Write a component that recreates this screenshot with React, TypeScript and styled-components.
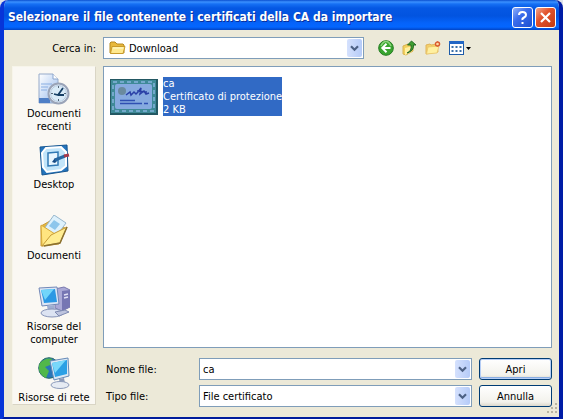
import React from "react";
import styled, { createGlobalStyle, css } from "styled-components";

const GlobalStyle = createGlobalStyle`
  *, *::before, *::after { box-sizing: border-box; }
  body { margin: 0; background: #dfe3ea; }
  body, button, input, select {
    font-family: "DejaVu Sans Condensed", "Liberation Sans", sans-serif;
    font-size: 11px;
    line-height: 13px;
    color: #000;
  }
`;

const Dialog = styled.main`
  display: flex;
  flex-direction: column;
  min-height: 100vh;
  border: 4px solid #0831d9;
  border-top: 0;
  border-color: #0d45dc #001ca6 #001c9c #0735d8;
  border-radius: 8px 8px 0 0;
  background: #ece9d8;
  overflow: hidden;
`;

const TitleBar = styled.header`
  display: flex;
  align-items: center;
  gap: 2px;
  height: 30px;
  margin: 0 -4px;
  padding: 4px 7px 0 8px;
  background: linear-gradient(
    #0a4fd0 0, #3b91ff 2px, #1670f4 4px, #0558e4 8px,
    #0254e0 16px, #0563fa 23px, #0366ff 27px, #0244c5 30px
  );
`;

const Title = styled.h1`
  flex: 1;
  margin: 0;
  white-space: nowrap;
  font-size: 12px;
  line-height: 16px;
  font-weight: 700;
  color: #fff;
  text-shadow: 1px 1px 0 #0a2f9a;
`;

const CaptionButton = styled.button<{ $danger?: boolean }>`
  display: grid;
  place-items: center;
  width: 21px;
  height: 21px;
  padding: 0;
  border: 1px solid #fff;
  border-radius: 3px;
  background: ${(p) =>
    p.$danger
      ? "linear-gradient(135deg, #f0a58c, #e2532c 40%, #c43a12)"
      : "linear-gradient(135deg, #8fb0fa, #3a6cec 40%, #1c4fd0)"};
`;

const Content = styled.div`
  flex: 1;
  display: grid;
  grid-template-columns: 84px minmax(0, 1fr);
  grid-template-rows: 22px minmax(0, 1fr);
  gap: 7px;
  padding: 7px 7px 8px 8px;
`;

const LookInLabel = styled.label`
  align-self: center;
  text-align: right;
`;

const Toolbar = styled.div`
  display: flex;
  align-items: center;
  gap: 8px;
`;

const Tools = styled.div`
  display: flex;
  align-items: center;
  gap: 8px;
  margin-left: 6px;
`;

const ToolButton = styled.button`
  display: flex;
  align-items: center;
  padding: 0;
  border: 0;
  background: none;
`;

const Field = styled.div<{ $lookIn?: boolean }>`
  position: relative;
  display: flex;
  align-items: center;
  height: 22px;
  border: 1px solid #7f9db9;
  background: #fff;
  ${(p) => p.$lookIn && css`flex: 0 1 261px;`}
`;

const controlStyle = css<{ $indent?: boolean }>`
  width: 100%;
  height: 20px;
  padding: 0 20px 0 ${(p) => (p.$indent ? 25 : 3)}px;
  border: 0;
  outline: 0;
  background: transparent;
  appearance: none;
`;
const Select = styled.select`${controlStyle}`;
const TextInput = styled.input`${controlStyle}`;

const FieldIcon = styled.span`
  position: absolute;
  left: 5px;
  display: flex;
  pointer-events: none;
`;

const Arrow = styled.span`
  position: absolute;
  right: 1px;
  display: grid;
  place-items: center;
  width: 15px;
  height: 18px;
  border-radius: 2px;
  background: linear-gradient(90deg, #d5e1fd, #b5cbf8);
  pointer-events: none;
`;

const Places = styled.nav`
  display: flex;
  flex-direction: column;
  margin-bottom: 4px;
  padding-top: 6px;
  border: 1px solid #f7f5ea;
  border-right-color: #d9d5c5;
  border-bottom-color: #d9d5c5;
  background: #faf8f3;
`;

const Place = styled.button`
  display: flex;
  flex-direction: column;
  align-items: center;
  gap: 2px;
  flex: 0 0 71px;
  padding: 0 2px;
  border: 0;
  background: none;

  &:last-child { flex-basis: 47px; }
`;

const Main = styled.div`
  display: flex;
  flex-direction: column;
  gap: 10px;
  padding-bottom: 2px;
`;

const FileList = styled.section`
  flex: 1;
  padding: 10px 6px;
  border: 1px solid #7f9db9;
  background: #fff;
`;

const FileItem = styled.button`
  display: flex;
  align-items: center;
  gap: 5px;
  padding: 0;
  border: 0;
  background: none;
  text-align: left;
`;

const FileText = styled.span`
  display: flex;
  flex-direction: column;
  background: #316ac5;
  color: #fff;
  white-space: nowrap;
`;

const Form = styled.form`
  display: grid;
  grid-template-columns: 89px minmax(0, 1fr) 73px;
  gap: 5px 7px;
  align-items: center;
`;

const FormLabel = styled.label`
  padding-left: 3px;
`;

const PushButton = styled.button<{ $primary?: boolean }>`
  height: 22px;
  padding: 0;
  border: 1px solid #003c74;
  border-radius: 3px;
  background: linear-gradient(#fff, #f3f2ec 80%, #dcd8cb);
  ${(p) => p.$primary && css`box-shadow: inset 0 0 0 1px #b5cdf5, inset 0 -2px 0 #89ade4;`}
`;

const Grip = styled.svg`
  position: fixed;
  right: 5px;
  bottom: 5px;
`;

const Chevron = () => (
  <Arrow>
    <svg width="9" height="7" viewBox="0 0 9 7">
      <path d="M1 1.2 4.5 4.7 8 1.2" fill="none" stroke="#4d6185" strokeWidth="2.2" />
    </svg>
  </Arrow>
);

const FolderIcon = () => (
  <svg width="17" height="16" viewBox="0 0 17 16">
    <path d="M1 13V3l1-1h4l2 2h6l1 1v8z" fill="#e8b83c" stroke="#b78a22" />
    <path d="M3 6.500h13l-2 7H1.500z" fill="#ffe98f" stroke="#c99b2c" />
    <path d="M4 8h10" stroke="#fffbd2" />
  </svg>
);

const BackIcon = () => (
  <svg width="16" height="16" viewBox="0 0 16 16">
    <circle cx="8" cy="8" r="7.300" fill="#39a52f" stroke="#237b20" />
    <path d="M3 6Q5 1.500 8 1.500T13 6" fill="none" stroke="#8bd47b" strokeWidth="1.500" />
    <path d="M8.500 3.800 4.300 8l4.200 4.200M4.800 8H12.500" fill="none" stroke="#fff" strokeWidth="2" />
  </svg>
);

const UpIcon = () => (
  <svg width="15" height="16" viewBox="0 0 15 16">
    <path d="M1 6 6 4l1 1 4-1v7l-7 4-3-1z" fill="#f3d05c" stroke="#d8b352" />
    <path d="m3 8 8-2-2 6-6 3z" fill="#fff0a0" />
    <path d="M5 13q5-2 4-8H5.500L9.500 1 14 5h-2.500Q12 11 5 13z" fill="#3f9e32" stroke="#1d6320" strokeWidth=".9" />
  </svg>
);

const NewFolderIcon = () => (
  <svg width="16" height="16" viewBox="0 0 16 16">
    <path d="M1 14V5l4-1 1 1 6-1 1 8z" fill="#f4d06a" stroke="#e0b45a" />
    <path d="m3 7 11-1-2 7-10.500 1z" fill="#fff0a0" stroke="#e8c468" strokeWidth=".8" />
    <path d="M12.500 1v6M9.500 4h6M10.500 2l4 4M14.500 2l-4 4" stroke="#ef9a6c" />
    <circle cx="12.500" cy="4" r="2" fill="#ffd9a0" stroke="#d8582f" strokeWidth="1.300" />
  </svg>
);

const ViewsIcon = () => (
  <svg width="23" height="16" viewBox="0 0 23 16">
    <rect x=".5" y="1.500" width="14" height="13" fill="#fff" stroke="#1d5ba8" />
    <path d="M0 1h15v3H0z" fill="#2367c5" />
    <path d="M2.500 6h2v2h-2zm4 0h2v2h-2zm4 0h2v2h-2zm-8 4h2v2h-2zm4 0h2v2h-2zm4 0h2v2h-2z" fill="#3b70a8" />
    <path d="M17 7h5l-2.500 3z" fill="#000" />
  </svg>
);

const RecentIcon = () => (
  <svg width="32" height="32" viewBox="0 0 32 32">
    <defs>
      <linearGradient id="paper" x2="1" y2="1">
        <stop stopColor="#fff" /><stop offset="1" stopColor="#95b9ed" />
      </linearGradient>
    </defs>
    <path d="M1 1h14l5 5v24H1z" fill="url(#paper)" stroke="#96aac9" />
    <path d="M15 1v5h5" fill="#fff" stroke="#8ba6cd" />
    <path d="M3 11h11M3 14h7M3 17h6" stroke="#89aee2" />
    <path d="M1 25h11v5H1z" fill="#4f7fc6" />
    <circle cx="20.500" cy="20.500" r="10" fill="#eef6fc" stroke="#9aa4b8" strokeWidth="2" />
    <circle cx="20.500" cy="20.500" r="8" fill="#d9ebf8" stroke="#b4c8de" />
    <path d="M20.500 13v2M20.500 26v2M13 20.500h2M26 20.500h2" stroke="#567" />
    <path d="m25 15-5 7-4-1m4 1h6" fill="none" stroke="#164066" strokeWidth="1.800" />
  </svg>
);

const DesktopIcon = () => (
  <svg width="32" height="32" viewBox="0 0 32 32">
    <path d="m2 3 27-2 1 26L4 31z" fill="#2374bd" stroke="#16558f" />
    <path d="m8 4 15-1 5 5v14l-5 4-14 2-4-5-1-14z" fill="#c2e5fa" stroke="#fff" strokeWidth="2" />
    <path d="m10 9 10-1v13l-10 1z" fill="#e8f6ff" stroke="#3079b5" strokeWidth="1.500" />
    <path d="m14 18 3-4 3 2-3 3z" fill="#164a84" />
    <path d="m17 16 10-4" stroke="#2667a2" strokeWidth="3" />
    <path d="m26 12 5-1" stroke="#a63a4b" strokeWidth="3" />
  </svg>
);

const DocumentsIcon = () => (
  <svg width="32" height="32" viewBox="0 0 32 32">
    <path d="m3 11 9-5 15 7-6 16-18 2z" fill="#e2b641" stroke="#c99d3c" />
    <path d="m16 0 12 8-11 15-11-9z" fill="#ddf1fc" stroke="#96b6cc" />
    <path d="m16 5 6 4-5 6-6-4z" fill="#8cc6ec" />
    <path d="m3 10 14 9L4 31z" fill="#ffe580" stroke="#d7aa3b" />
    <path d="m29 12-16 8-9 11 18-3z" fill="#ffed92" stroke="#c59a36" />
    <path d="m29 12-7 16-16 3" fill="none" stroke="#8b7131" strokeWidth="1.500" />
  </svg>
);

const ComputerIcon = () => (
  <svg width="32" height="32" viewBox="0 0 32 32">
    <path d="m17 3 9-2 6 3v17l-8 4-7-3z" fill="#aaa9d6" stroke="#7878ad" />
    <path d="m24 5 8-1v17l-8 4z" fill="#7676b3" />
    <path d="m26 9 4-1M26 12l4-1" stroke="#e1e1f6" strokeWidth="1.500" />
    <path d="m1 2 18-1 2 17-17 2z" fill="#dce6f5" stroke="#7288b7" />
    <path d="m3 4 14-1 2 13-13 1z" fill="#2b98e4" />
    <path d="m3 4 13-1-9 11z" fill="#71d5fa" />
    <path d="m9 20 7-1 1 5-7 1z" fill="#9faed1" />
    <ellipse cx="14" cy="27" rx="11" ry="4" fill="#dce3f2" stroke="#8794b8" />
    <path d="m17 26 10-2 4 2-10 4z" fill="#bdc4de" stroke="#7e8ab1" />
  </svg>
);

const NetworkIcon = () => (
  <svg width="32" height="32" viewBox="0 0 32 32">
    <circle cx="11" cy="11" r="10.300" fill="#2876b8" stroke="#286b65" />
    <path d="M2 6Q8 0 14 2l-2 6-5 2 4 4-3 7Q0 17 1 9z" fill="#51b84a" />
    <path d="m12 4 18-3 1 18-15 4z" fill="#dae8f5" stroke="#668ab7" />
    <path d="m14 6 15-3v14l-12 3z" fill="#2ba0e5" />
    <path d="m14 6 14-3-11 13z" fill="#79d8fa" />
    <path d="m21 22 5-1 1 5-5 1z" fill="#8c9bba" />
    <ellipse cx="22" cy="28" rx="9" ry="3.500" fill="#e6ebf3" stroke="#8c9bba" />
  </svg>
);

const CertificateIcon = () => (
  <svg width="48" height="36" viewBox="0 0 48 36">
    <path d="M0 0h48v36H0z" fill="#235863" />
    <path d="M1 1h45v33H1z" fill="#3f8a98" />
    <rect x="3" y="3" width="41" height="29" fill="none" stroke="#74a9cc" strokeWidth="2" strokeDasharray="4 3" />
    <rect x="5" y="5" width="37" height="25" rx="2" fill="#86aadf" />
    <circle cx="12" cy="12" r="4" fill="#6a8a9e" />
    <path d="m16 16 4-3 1 3 3-3 2 2 2-2 3-4-1 6 4-3 2 3 3-1M27 12l10 1" fill="none" stroke="#2a40a6" strokeWidth="1.500" />
    <path d="M10 21.500h15M10 24.500h22M34 24.500h4" stroke="#2f4fb2" strokeWidth="1.500" />
  </svg>
);

const places = [
  { label: "Documenti recenti", Icon: RecentIcon },
  { label: "Desktop", Icon: DesktopIcon },
  { label: "Documenti", Icon: DocumentsIcon },
  { label: "Risorse del computer", Icon: ComputerIcon },
  { label: "Risorse di rete", Icon: NetworkIcon },
];

const tools = [
  { label: "Indietro", Icon: BackIcon },
  { label: "Livello superiore", Icon: UpIcon },
  { label: "Nuova cartella", Icon: NewFolderIcon },
  { label: "Visualizza", Icon: ViewsIcon },
];

export default function App() {
  return (
    <Dialog>
      <GlobalStyle />
      <TitleBar>
        <Title>Selezionare il file contenente i certificati della CA da importare</Title>
        <CaptionButton aria-label="Guida">
          <svg width="15" height="15" viewBox="0 0 15 15">
            <path d="M4 5Q4 2 7.500 2T11 5Q11 6.500 9 7.500T7.500 10" fill="none" stroke="#fff" strokeWidth="2" />
            <path d="M6.500 12h2v2h-2z" fill="#fff" />
          </svg>
        </CaptionButton>
        <CaptionButton $danger aria-label="Chiudi">
          <svg width="15" height="15" viewBox="0 0 15 15">
            <path d="m3 3 9 9m0-9-9 9" stroke="#fff" strokeWidth="2.200" />
          </svg>
        </CaptionButton>
      </TitleBar>
      <Content>
        <LookInLabel htmlFor="look-in">Cerca in:</LookInLabel>
        <Toolbar>
          <Field $lookIn>
            <FieldIcon><FolderIcon /></FieldIcon>
            <Select id="look-in" $indent defaultValue="Download">
              <option>Download</option>
            </Select>
            <Chevron />
          </Field>
          <Tools>
            {tools.map(({ label, Icon }) => (
              <ToolButton key={label} aria-label={label}><Icon /></ToolButton>
            ))}
          </Tools>
        </Toolbar>
        <Places>
          {places.map(({ label, Icon }) => (
            <Place key={label}><Icon /><span>{label}</span></Place>
          ))}
        </Places>
        <Main>
          <FileList>
            <FileItem>
              <CertificateIcon />
              <FileText>
                <span>ca</span>
                <span>Certificato di protezione</span>
                <span>2 KB</span>
              </FileText>
            </FileItem>
          </FileList>
          <Form onSubmit={(e) => e.preventDefault()}>
            <FormLabel htmlFor="file-name">Nome file:</FormLabel>
            <Field>
              <TextInput id="file-name" defaultValue="ca" />
              <Chevron />
            </Field>
            <PushButton $primary type="submit">Apri</PushButton>
            <FormLabel htmlFor="file-type">Tipo file:</FormLabel>
            <Field>
              <Select id="file-type" defaultValue="File certificato">
                <option>File certificato</option>
              </Select>
              <Chevron />
            </Field>
            <PushButton type="button">Annulla</PushButton>
          </Form>
        </Main>
      </Content>
      <Grip width="12" height="12" viewBox="0 0 12 12">
        <path d="M9 1h2v2H9zM5 5h2v2H5zm4 0h2v2H9zM1 9h2v2H1zm4 0h2v2H5zm4 0h2v2H9z" fill="#b8b4a2" />
      </Grip>
    </Dialog>
  );
}
